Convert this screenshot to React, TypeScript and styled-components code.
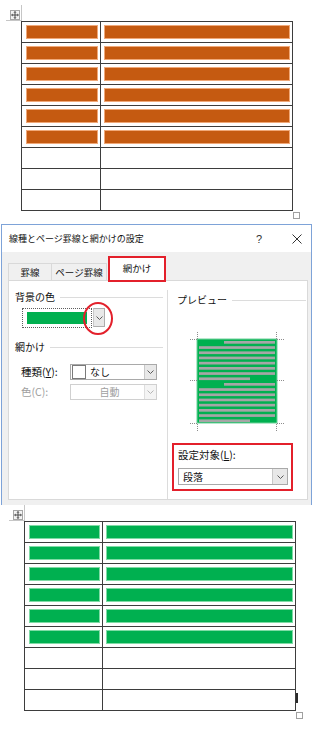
import React from 'react'
import styled, { createGlobalStyle } from 'styled-components'

const GlobalStyle = createGlobalStyle`
  html, body {
    margin: 0;
    padding: 0;
    background: #ffffff;
  }
  body {
    font-family: "Noto Sans CJK JP", "Noto Sans", sans-serif;
    color: #111111;
  }
`

type TableProps = {
  c1: number
  c2: number
  fill: string
  edge: string
  shaded: number
  rows: number
  caret?: boolean
}

const ShadedTable: React.FC<TableProps> = (props: TableProps) => {
  const cells = []
  for (let r = 0; r < props.rows; r++) {
    for (let c = 0; c < 2; c++) {
      cells.push(
        <Cell key={`${r}-${c}`} $right={c === 1}>
          {r < props.shaded && <Bar $fill={props.fill} $edge={props.edge} />}
        </Cell>
      )
    }
  }
  return (
    <TableWrap>
      <MoveHandle>
        <svg width="8" height="8" viewBox="0 0 8 8">
          <path d="M4 1V7M1 4H7" stroke="#4a4a4a" strokeWidth="1" />
          <path d="M4 0L2.4 1.6H5.6Z M4 8L2.4 6.4H5.6Z M0 4L1.6 2.4V5.6Z M8 4L6.4 2.4V5.6Z" fill="#4a4a4a" />
        </svg>
      </MoveHandle>
      <Grid $c1={props.c1} $c2={props.c2}>{cells}</Grid>
      <ResizeHandle />
      {props.caret && <Caret />}
    </TableWrap>
  )
}

const Chevron: React.FC<{ color?: string }> = ({ color = '#5a5a5a' }) => (
  <svg width="7" height="4" viewBox="0 0 7 4">
    <polyline points="0.5,0.5 3.5,3.5 6.5,0.5" fill="none" stroke={color} strokeWidth="1" />
  </svg>
)

const PreviewDrawing: React.FC = () => {
  const lines = []
  const pitch = 5.2
  for (let p = 0; p < 2; p++) {
    const top = p === 0 ? 9 : 51
    for (let i = 0; i < 8; i++) {
      const x1 = i === 0 ? 34 : 9
      const x2 = i === 7 ? 60 : 85
      lines.push(<rect key={`${p}-${i}`} x={x1} y={top + i * pitch} width={x2 - x1} height={2.7} fill="#a6a6a6" />)
    }
  }
  const tick = { stroke: '#8c8c8c', strokeWidth: 1, strokeDasharray: '1 1' }
  return (
    <PreviewSvg width="94" height="100" viewBox="0 0 94 100">
      <rect x="7" y="7" width="80" height="84" fill="#00b050" stroke="#6fd29a" strokeWidth="1" />
      {lines}
      <path d="M7.5 0V7M0 7.5H7M86.5 0V7M87 7.5H94" {...tick} />
      <path d="M0 48.5H7M87 48.5H94" {...tick} />
      <path d="M0 91.5H7M87 91.5H94M7.5 92V99M86.5 92V99" {...tick} />
    </PreviewSvg>
  )
}

const App: React.FC = () => {
  return (
    <Page>
      <GlobalStyle />
      <DocArea $h={224} $top={21} $left={21}>
        <ShadedTable c1={78} c2={191} fill="#c55a11" edge="#f0a878" shaded={6} rows={9} />
      </DocArea>

      <Dialog>
        <TitleBar>
          <TitleText>線種とページ罫線と網かけの設定</TitleText>
          <TitleButton>?</TitleButton>
          <TitleButton>
            <svg width="10" height="10" viewBox="0 0 10 10">
              <path d="M0.5 0.5L9.5 9.5M9.5 0.5L0.5 9.5" stroke="#333" strokeWidth="1" />
            </svg>
          </TitleButton>
        </TitleBar>
        <DialogBody>
          <TabRow>
            <Tab $w={44}>罫線</Tab>
            <Tab $w={55} $noLeft>ページ罫線</Tab>
            <Tab $w={58} $active>網かけ</Tab>
          </TabRow>
          <Panel>
            <LeftCol>
              <GroupHeading>
                <span>背景の色</span>
                <Rule />
              </GroupHeading>
              <ColorRow>
                <SwatchBox>
                  <Swatch />
                </SwatchBox>
                <DropButton $h={19}>
                  <Chevron />
                </DropButton>
                <CircleMark />
              </ColorRow>
              <GroupHeading $gap={12}>
                <span>網かけ</span>
                <Rule />
              </GroupHeading>
              <FieldRow $gap={10}>
                <FieldLabel>
                  種類(<u>Y</u>):
                </FieldLabel>
                <Select $w={87} $h={16}>
                  <CheckSquare />
                  <SelectText>なし</SelectText>
                  <DropButton>
                    <Chevron />
                  </DropButton>
                </Select>
              </FieldRow>
              <FieldRow $gap={4}>
                <FieldLabel $disabled>色(C):</FieldLabel>
                <Select $w={87} $h={16} $disabled>
                  <SelectText $center>自動</SelectText>
                  <DropButton $disabled>
                    <Chevron color="#b4b4b4" />
                  </DropButton>
                </Select>
              </FieldRow>
            </LeftCol>
            <RightCol>
              <GroupHeading $inset={9}>
                <span>プレビュー</span>
                <Rule />
              </GroupHeading>
              <PreviewDrawing />
              <TargetBox>
                <FieldLabel>
                  設定対象(<u>L</u>):
                </FieldLabel>
                <Select $w={110} $h={17} $gap={6}>
                  <SelectText>段落</SelectText>
                  <DropButton $w={15}>
                    <Chevron />
                  </DropButton>
                </Select>
              </TargetBox>
            </RightCol>
          </Panel>
        </DialogBody>
      </Dialog>

      <DocArea $h={246} $top={16} $left={24}>
        <ShadedTable c1={77} c2={192} fill="#00b050" edge="#7fdba5" shaded={6} rows={9} caret />
      </DocArea>
    </Page>
  )
}

export default App

const Page = styled.div`
  width: 320px;
  height: 751px;
  overflow: hidden;
  background: #ffffff;
`

type DocProps = { $h: number; $top: number; $left: number }

const DocArea = styled.div<DocProps>`
  height: ${(p: DocProps) => p.$h}px;
  padding: ${(p: DocProps) => p.$top}px 0 0 ${(p: DocProps) => p.$left}px;
  box-sizing: border-box;
`

const TableWrap = styled.div`
  position: relative;
  width: max-content;
  &::before {
    content: '';
    position: absolute;
    left: 0;
    top: -16px;
    width: 1px;
    height: 16px;
    background: #c6c6c6;
  }
  &::after {
    content: '';
    position: absolute;
    left: -15px;
    top: -1px;
    width: 15px;
    height: 1px;
    background: #c6c6c6;
  }
`

type GridProps = { $c1: number; $c2: number }

const Grid = styled.div<GridProps>`
  display: grid;
  grid-template-columns: ${(p: GridProps) => p.$c1}px ${(p: GridProps) => p.$c2}px;
  grid-auto-rows: 20px;
  gap: 1px;
  background: #3d3d3d;
  border: 1px solid #3d3d3d;
`

const Cell = styled.div<{ $right: boolean }>`
  display: flex;
  background: #ffffff;
  padding: 3px 2px 3px ${(p) => (p.$right ? 3 : 4)}px;
`

type BarProps = { $fill: string; $edge: string }

const Bar = styled.div<BarProps>`
  flex: 1;
  height: 14px;
  background: ${(p: BarProps) => p.$fill};
  box-shadow: inset 0 0 0 1px ${(p: BarProps) => p.$edge};
`

const MoveHandle = styled.div`
  position: absolute;
  left: -11px;
  top: -11px;
  width: 10px;
  height: 10px;
  box-sizing: border-box;
  border: 1px solid #a6a6a6;
  background: #f3f3f3;
  display: flex;
  align-items: center;
  justify-content: center;
  z-index: 1;
`

const ResizeHandle = styled.div`
  position: absolute;
  left: 100%;
  top: calc(100% + 1px);
  width: 7px;
  height: 7px;
  box-sizing: border-box;
  border: 1px solid #a0a0a0;
  background: #ffffff;
`

const Caret = styled.div`
  position: absolute;
  left: 100%;
  bottom: 8px;
  width: 2px;
  height: 10px;
  background: #2b2b2b;
`

const Dialog = styled.div`
  margin-left: 1px;
  width: 311px;
  height: 281px;
  box-sizing: border-box;
  border: 1px solid #7ea3d8;
  border-bottom: none;
  background: #f0f0f0;
  overflow: hidden;
  display: flex;
  flex-direction: column;
`

const TitleBar = styled.div`
  height: 27px;
  flex: none;
  background: #ffffff;
  display: flex;
  align-items: center;
  padding-left: 7px;
`

const TitleText = styled.span`
  flex: 1;
  font-size: 9px;
  color: #111111;
  white-space: nowrap;
`

const TitleButton = styled.span`
  width: 28px;
  margin-left: 10px;
  display: flex;
  justify-content: center;
  align-items: center;
  font-family: "Liberation Sans", sans-serif;
  font-size: 11px;
  color: #333333;
`

const DialogBody = styled.div`
  flex: 1;
  padding: 5px 3px 0 6px;
  display: flex;
  flex-direction: column;
`

const TabRow = styled.div`
  height: 23px;
  display: flex;
  align-items: flex-end;
  flex: none;
`

type TabProps = { $w: number; $active?: boolean; $noLeft?: boolean }

const Tab = styled.div<TabProps>`
  width: ${(p: TabProps) => p.$w}px;
  box-sizing: border-box;
  height: ${(p: TabProps) => (p.$active ? 26 : 17)}px;
  margin-left: ${(p: TabProps) => (p.$active ? 1 : 0)}px;
  margin-bottom: ${(p: TabProps) => (p.$active ? -2 : 0)}px;
  border: ${(p: TabProps) => (p.$active ? '2px solid #e3202b' : '1px solid #d9d9d9')};
  border-bottom: ${(p: TabProps) => (p.$active ? '2px solid #e3202b' : 'none')};
  border-left-width: ${(p: TabProps) => (p.$noLeft ? 0 : p.$active ? 2 : 1)}px;
  background: ${(p: TabProps) => (p.$active ? '#ffffff' : '#f0f0f0')};
  font-size: 9.5px;
  line-height: ${(p: TabProps) => (p.$active ? 20 : 16)}px;
  text-align: center;
  white-space: nowrap;
  position: relative;
  z-index: ${(p: TabProps) => (p.$active ? 2 : 0)};
`

const Panel = styled.div`
  height: 220px;
  flex: none;
  box-sizing: border-box;
  background: #ffffff;
  border: 1px solid #d9d9d9;
  display: grid;
  grid-template-columns: 158px 1fr;
`

const LeftCol = styled.div`
  padding: 9px 4px 0 6px;
`

const RightCol = styled.div`
  margin-top: 9px;
  border-left: 1px solid #dcdcdc;
  padding-top: 3px;
`

type HeadingProps = { $gap?: number; $inset?: number }

const GroupHeading = styled.div<HeadingProps>`
  display: flex;
  align-items: center;
  gap: 5px;
  height: 14px;
  margin-top: ${(p: HeadingProps) => p.$gap ?? 0}px;
  margin-left: ${(p: HeadingProps) => p.$inset ?? 0}px;
  margin-right: ${(p: HeadingProps) => (p.$inset ? 1 : 0)}px;
  font-size: 10px;
  line-height: 14px;
  white-space: nowrap;
`

const Rule = styled.div`
  flex: 1;
  height: 1px;
  background: #dcdcdc;
`

const ColorRow = styled.div`
  position: relative;
  display: flex;
  align-items: flex-start;
  margin: 4px 0 0 7px;
  height: 20px;
`

const SwatchBox = styled.div`
  width: 70px;
  height: 20px;
  box-sizing: border-box;
  border: 1px dotted #5e5e5e;
  padding: 3px 4px 3px 4px;
`

const Swatch = styled.div`
  height: 100%;
  background: #00b050;
`

const CircleMark = styled.div`
  position: absolute;
  left: 61px;
  top: -6px;
  width: 30px;
  height: 33px;
  box-sizing: border-box;
  border: 2px solid #e3202b;
  border-radius: 50%;
`

type DropProps = { $h?: number; $w?: number; $disabled?: boolean }

const DropButton = styled.span<DropProps>`
  width: ${(p: DropProps) => p.$w ?? 12}px;
  height: ${(p: DropProps) => (p.$h ? `${p.$h}px` : 'auto')};
  align-self: stretch;
  margin-left: ${(p: DropProps) => (p.$h ? 1 : 0)}px;
  box-sizing: border-box;
  border: ${(p: DropProps) => (p.$h ? '1px solid #adadad' : 'none')};
  border-left: 1px solid ${(p: DropProps) => (p.$disabled ? '#dedede' : '#c8c8c8')};
  background: ${(p: DropProps) => (p.$disabled ? '#f4f4f4' : '#e8e8e8')};
  display: flex;
  align-items: center;
  justify-content: center;
`

const FieldRow = styled.div<{ $gap: number }>`
  display: flex;
  align-items: center;
  margin-top: ${(p) => p.$gap}px;
  padding-left: 6px;
`

const FieldLabel = styled.span<{ $disabled?: boolean }>`
  width: 49px;
  font-size: 10.5px;
  line-height: 14px;
  white-space: nowrap;
  color: ${(p) => (p.$disabled ? '#a0a0a0' : '#111111')};
  u {
    text-underline-offset: 1px;
  }
`

type SelectProps = { $w: number; $h: number; $disabled?: boolean; $gap?: number }

const Select = styled.div<SelectProps>`
  width: ${(p: SelectProps) => p.$w}px;
  height: ${(p: SelectProps) => p.$h}px;
  margin-top: ${(p: SelectProps) => p.$gap ?? 0}px;
  box-sizing: border-box;
  border: 1px solid ${(p: SelectProps) => (p.$disabled ? '#d0d0d0' : '#a9a9a9')};
  background: #ffffff;
  display: flex;
  align-items: center;
  font-size: 10px;
  color: ${(p: SelectProps) => (p.$disabled ? '#a0a0a0' : '#111111')};
`

const SelectText = styled.span<{ $center?: boolean }>`
  flex: 1;
  padding-left: 4px;
  text-align: ${(p) => (p.$center ? 'center' : 'left')};
  line-height: 12px;
  white-space: nowrap;
`

const CheckSquare = styled.span`
  width: 14px;
  height: 14px;
  margin-left: 1px;
  box-sizing: border-box;
  border: 1px solid #7a7a7a;
  background: #ffffff;
  flex: none;
`

const PreviewSvg = styled.svg`
  display: block;
  margin: 25px 0 0 22px;
`

const TargetBox = styled.div`
  width: 121px;
  height: 48px;
  margin: 11px 0 0 4px;
  box-sizing: border-box;
  border: 2px solid #e3202b;
  padding: 3px 0 0 4px;
  ${FieldLabel} {
    display: block;
    width: auto;
  }
`
